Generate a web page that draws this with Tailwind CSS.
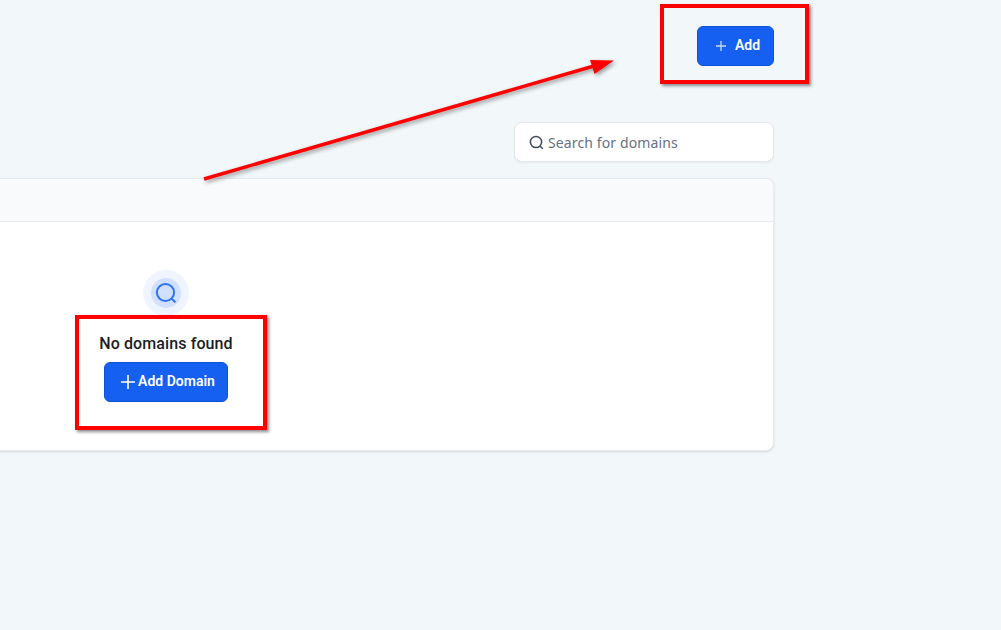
<!DOCTYPE html>
<html lang="en">
<head>
  <meta charset="UTF-8">
  <meta name="viewport" content="width=device-width, initial-scale=1.0">
  <title>Domains</title>
  <script src="https://cdn.jsdelivr.net/npm/@tailwindcss/browser@4"></script>
</head>
<body class="relative h-[630px] w-[1001px] overflow-hidden bg-[#f2f7fa] font-['Roboto',sans-serif]">
  <!-- Page -->
  <main class="flex flex-col items-end pr-[227px] pt-[26px]">
    <button class="flex h-10 w-[77px] items-center justify-center gap-[8px] rounded-md border border-[#0f52d6] bg-[#1660f1] pb-[2px] pl-[4px] text-sm font-semibold text-white">
      <svg class="mt-[2px] h-3 w-3" viewBox="0 0 12 12" fill="none" stroke="#c9dafc" stroke-width="1.3"><path d="M6 1v10M1 6h10"/></svg>
      Add
    </button>

    <div class="mt-[56px] flex h-[40px] w-[260px] items-center gap-[4px] rounded-lg border border-[#e2e6ec] bg-white pl-[14px] shadow-xs">
      <svg class="h-[15px] w-[15px]" viewBox="0 0 15 15" fill="none" stroke="#3f4a5c" stroke-width="1.5"><circle cx="7" cy="7" r="5.6"/><path d="M11.2 11.2l2.6 2.6"/></svg>
      <span class="pt-[2px] font-['Noto_Sans',sans-serif] text-sm tracking-[0.12px] text-[#667085]">Search for domains</span>
    </div>

    <section class="mt-[16px] h-[273px] w-[1216px] shrink-0 overflow-hidden rounded-lg border border-[#e6e9ee] bg-white shadow-sm">
      <div class="h-[43px] border-b border-[#e6e9ee] bg-[#f8fafc]"></div>
      <div class="flex flex-col items-center pt-[48px]">
        <div class="flex h-[46px] w-[46px] items-center justify-center rounded-full bg-[#eff4ff]">
          <div class="flex h-[30px] w-[30px] items-center justify-center rounded-full bg-[#d1e0ff]">
            <svg class="h-[22px] w-[22px]" viewBox="0 0 22 22" fill="none" stroke="#2f73f2" stroke-width="2"><circle cx="10.5" cy="10.5" r="8.6"/><path d="M16.8 16.8l3.6 3.6"/></svg>
          </div>
        </div>
        <p class="mt-[18px] text-base leading-[20px] font-medium tracking-[0.1px] text-[#1a1d24]">No domains found</p>
        <button class="mt-[8px] flex h-10 w-[124px] items-center justify-center gap-[3px] rounded-md border border-[#0f52d6] bg-[#1660f1] pb-[2px] pl-[4px] text-sm font-semibold text-white">
          <svg class="mt-[2px] h-[14px] w-[14px]" viewBox="0 0 14 14" fill="none" stroke="#fff" stroke-width="1.6"><path d="M7 0v14M0 7h14"/></svg>
          Add Domain
        </button>
      </div>
    </section>
  </main>

  <!-- Red annotations drawn over the screenshot -->
  <div class="absolute top-[4px] left-[660px] h-[80px] w-[149px] border-4 border-[#ff0000] shadow-[2px_2px_3px_rgba(0,0,0,0.45)]"></div>
  <div class="absolute top-[315px] left-[75px] h-[115px] w-[192px] border-4 border-[#ff0000] shadow-[2px_2px_3px_rgba(0,0,0,0.45)]"></div>
  <svg class="absolute top-0 left-0 drop-shadow-[2px_2px_2px_rgba(0,0,0,0.4)]" width="1001" height="630" fill="none">
    <path d="M204 179L594 66" stroke="#ff0000" stroke-width="3.4"/>
    <path d="M614 60.5L590 60L594.5 74Z" fill="#ff0000"/>
  </svg>
</body>
</html>
